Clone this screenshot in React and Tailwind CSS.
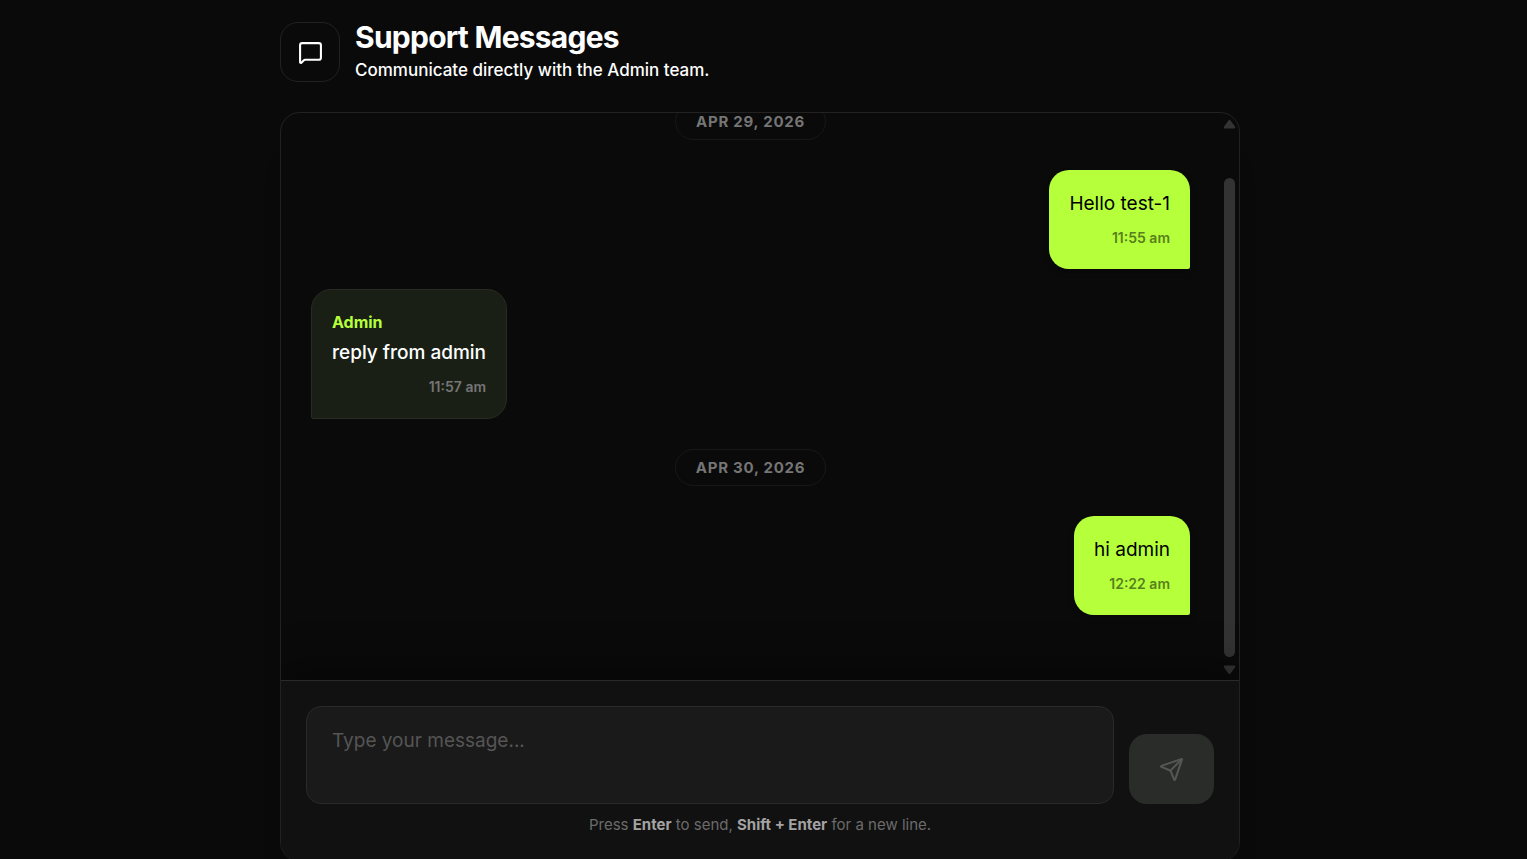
import React from "react";
import { MessageSquare, Send } from "lucide-react";

const thread = [
  { type: "date", label: "Apr 29, 2026" },
  { type: "mine", text: "Hello test-1", time: "11:55 am" },
  { type: "admin", text: "reply from admin", time: "11:57 am" },
  { type: "date", label: "Apr 30, 2026" },
  { type: "mine", text: "hi admin", time: "12:22 am" },
];

function DateChip({ label }) {
  return (
    <div className="my-[10px] flex justify-center">
      <span className="rounded-full border border-[#181818] px-5 py-2 text-[15px] leading-[19px] font-bold tracking-wider text-[#757575] uppercase">
        {label}
      </span>
    </div>
  );
}

function Bubble({ mine, text, time }) {
  return (
    <div className={mine ? "flex justify-end" : "flex justify-start"}>
      <div
        className={
          mine
            ? "rounded-[20px] rounded-br-[2px] bg-[#b6ff3b] p-5 text-black shadow-[0_4px_6px_rgba(0,0,0,0.2)]"
            : "rounded-[20px] rounded-bl-[2px] border border-[#282b24] bg-[#1a1f16] p-5 text-white"
        }
      >
        {!mine && <p className="mb-[5px] text-[16px] leading-6 font-bold text-[#b6ff3b]">Admin</p>}
        <p className={mine ? "text-[19px] leading-7" : "text-[19px] leading-7 font-medium"}>{text}</p>
        <p
          className={
            mine
              ? "mt-2 text-right text-[14px] leading-[23px] font-semibold text-[#58801c]"
              : "mt-2 text-right text-[14px] leading-[23px] font-semibold text-[#757575]"
          }
        >
          {time}
        </p>
      </div>
    </div>
  );
}

function ScrollTrack() {
  return (
    <div aria-hidden="true" className="flex w-[19px] shrink-0 flex-col items-center pt-[6px] pb-[5px]">
      <svg width="13" height="10" viewBox="0 0 13 10" fill="#333">
        <path d="M5.5 1.4Q6.5 0 7.5 1.4L12 7.6Q13 9.4 11.4 9.4H1.6Q0 9.4 1 7.6Z" />
      </svg>
      <div className="mt-[49px] mb-2 w-[11px] flex-1 rounded-full bg-[#333]" />
      <svg width="13" height="10" viewBox="0 0 13 10" fill="#333">
        <path d="M5.5 8.6Q6.5 10 7.5 8.6L12 2.4Q13 .6 11.4 .6H1.6Q0 .6 1 2.4Z" />
      </svg>
    </div>
  );
}

export default function App() {
  return (
    <div className="h-screen overflow-hidden bg-[#0a0a0a] pr-[7px] font-[Inter,sans-serif] text-white">
      <div className="mx-auto w-full max-w-[960px] pt-[22px]">
        {/* Header */}
        <header className="mb-[30px] flex h-[60px] items-center gap-[15px]">
          <div className="flex size-[60px] shrink-0 items-center justify-center rounded-[18px] border border-[#222]">
            <MessageSquare size={25} />
          </div>
          <div>
            <h1 className="mb-[2px] text-[30px] leading-[34px] font-bold tracking-tight">Support Messages</h1>
            <p className="text-[17px] leading-[28px] font-medium">Communicate directly with the Admin team.</p>
          </div>
        </header>

        {/* Chat card */}
        <main className="flex h-[calc(100vh-109px)] flex-col overflow-hidden rounded-[20px] border border-[#222] shadow-[0_40px_30px_-20px_rgba(0,0,0,0.4)]">
          <div className="flex min-h-0 flex-1">
            <div className="flex min-w-0 flex-1 flex-col justify-end gap-5 overflow-hidden px-[30px] pb-[65px]">
              {thread.map((item, i) =>
                item.type === "date" ? (
                  <DateChip key={i} label={item.label} />
                ) : (
                  <Bubble key={i} mine={item.type === "mine"} text={item.text} time={item.time} />
                )
              )}
            </div>
            <ScrollTrack />
          </div>

          {/* Composer */}
          <form
            className="border-t border-[#2a2a2a] bg-[#111] p-[25px] shadow-[0_-12px_38px_rgba(0,0,0,0.4)]"
            onSubmit={(e) => e.preventDefault()}
          >
            <div className="flex items-end gap-[15px]">
              <textarea
                aria-label="Message"
                placeholder="Type your message..."
                className="block h-[98px] min-w-0 flex-1 resize-none rounded-[15px] border border-[#2a2a2a] bg-[#1a1a1a] px-[25px] py-5 text-[19px] leading-7 outline-none placeholder:text-[#555]"
              />
              <button
                type="submit"
                disabled
                aria-label="Send message"
                className="flex h-[70px] w-[85px] shrink-0 items-center justify-center rounded-[18px] bg-[#2a2c2a] text-[#555]"
              >
                <Send size={25} />
              </button>
            </div>
            <p className="mt-[10px] text-center text-[15px] leading-[22px] text-[#6b6b6b]">
              Press <strong className="text-[#a3a3a3]">Enter</strong> to send,{" "}
              <strong className="text-[#a3a3a3]">Shift + Enter</strong> for a new line.
            </p>
          </form>
        </main>
      </div>
    </div>
  );
}
